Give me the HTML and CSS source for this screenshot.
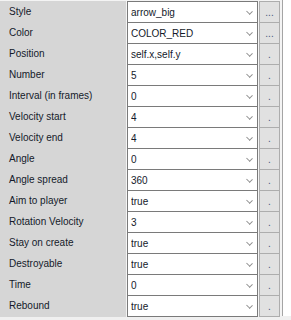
FILE: index.html
```html
<!DOCTYPE html>
<html lang="en">
<head>
  <meta charset="UTF-8" />
  <title>Bullet properties</title>
  <link rel="stylesheet" href="styles.css">
</head>
<body>

  <div class="props">
    <div class="row">
      <div class="label">Style</div>
      <div class="combo"><span class="value">arrow_big</span><span class="chev"></span></div>
      <button class="more">...</button>
    </div>
    <div class="row">
      <div class="label">Color</div>
      <div class="combo"><span class="value">COLOR_RED</span><span class="chev"></span></div>
      <button class="more">...</button>
    </div>
    <div class="row">
      <div class="label">Position</div>
      <div class="combo"><span class="value">self.x,self.y</span><span class="chev"></span></div>
      <button class="more">.</button>
    </div>
    <div class="row">
      <div class="label">Number</div>
      <div class="combo"><span class="value">5</span><span class="chev"></span></div>
      <button class="more">.</button>
    </div>
    <div class="row">
      <div class="label">Interval (in frames)</div>
      <div class="combo"><span class="value">0</span><span class="chev"></span></div>
      <button class="more">.</button>
    </div>
    <div class="row">
      <div class="label">Velocity start</div>
      <div class="combo"><span class="value">4</span><span class="chev"></span></div>
      <button class="more">.</button>
    </div>
    <div class="row">
      <div class="label">Velocity end</div>
      <div class="combo"><span class="value">4</span><span class="chev"></span></div>
      <button class="more">.</button>
    </div>
    <div class="row">
      <div class="label">Angle</div>
      <div class="combo"><span class="value">0</span><span class="chev"></span></div>
      <button class="more">.</button>
    </div>
    <div class="row">
      <div class="label">Angle spread</div>
      <div class="combo"><span class="value">360</span><span class="chev"></span></div>
      <button class="more">.</button>
    </div>
    <div class="row">
      <div class="label">Aim to player</div>
      <div class="combo"><span class="value">true</span><span class="chev"></span></div>
      <button class="more">.</button>
    </div>
    <div class="row">
      <div class="label">Rotation Velocity</div>
      <div class="combo"><span class="value">3</span><span class="chev"></span></div>
      <button class="more">.</button>
    </div>
    <div class="row">
      <div class="label">Stay on create</div>
      <div class="combo"><span class="value">true</span><span class="chev"></span></div>
      <button class="more">.</button>
    </div>
    <div class="row">
      <div class="label">Destroyable</div>
      <div class="combo"><span class="value">true</span><span class="chev"></span></div>
      <button class="more">.</button>
    </div>
    <div class="row">
      <div class="label">Time</div>
      <div class="combo"><span class="value">0</span><span class="chev"></span></div>
      <button class="more">.</button>
    </div>
    <div class="row">
      <div class="label">Rebound</div>
      <div class="combo"><span class="value">true</span><span class="chev"></span></div>
      <button class="more">.</button>
    </div>
  </div>
  <div class="footer"></div>

</body>
</html>
```

FILE: styles.css
```css
* {
  box-sizing: border-box;
}
body, html {
  margin: 0;
  padding: 0;
  font-family: "Liberation Sans", Arial, sans-serif;
  font-size: 10px;
  background-color: #fff;
  color: #141a2a;
}

.props {
  display: flex;
  flex-direction: column;
  gap: 1px;
  width: 283px;
  padding: 1px 2px 1px 0;
  background-color: #f4f4f4;
  border-right: 1px solid #a5a5a5;
}

.row {
  display: grid;
  grid-template-columns: 126px 131px 21px;
  column-gap: 1px;
  height: 20px;
}

.label {
  background-color: #d6d6d6;
  padding: 2px 0 0 9px;
  line-height: 18px;
  white-space: nowrap;
}

.combo {
  display: flex;
  align-items: center;
  background-color: #fff;
  border: 1px solid #7a7a7a;
  padding: 1px 4px 0 3px;
}

.value {
  flex: 1;
  white-space: nowrap;
  overflow: hidden;
}

.chev {
  width: 5px;
  height: 5px;
  margin: 0 1px 3px 0;
  border-right: 1px solid #8a8a8a;
  border-bottom: 1px solid #8a8a8a;
  transform: rotate(45deg) scaleY(0.9);
}

.more {
  margin: 0;
  padding: 0;
  border: 1px solid #adadad;
  background-color: #e1e1e1;
  font-family: "Liberation Sans", Arial, sans-serif;
  font-size: 10px;
  color: #4a5a7a;
  line-height: 18px;
  padding-top: 2px;
}

.footer {
  height: 5px;
  background-color: #f0f0f0;
}
```
